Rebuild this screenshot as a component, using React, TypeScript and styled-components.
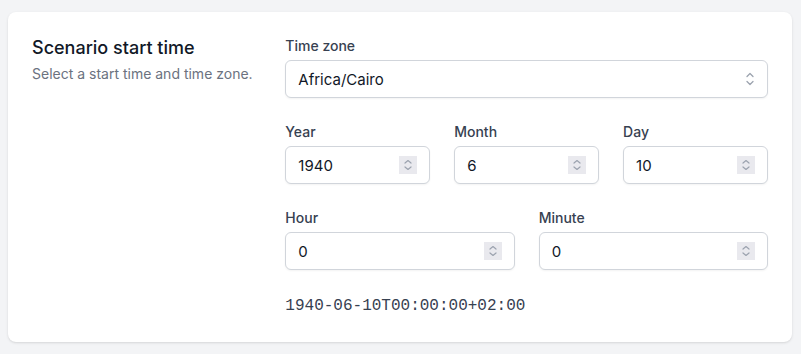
import React from 'react';
import styled, { createGlobalStyle } from 'styled-components';

const GlobalStyle = createGlobalStyle`
  body {
    margin: 0;
    padding: 12px 9px 12px 8px;
    background: #f3f4f6;
    font-family: Inter, 'Noto Sans', sans-serif;
    color: #111827;
  }
`;

const Card = styled.section`
  display: grid;
  grid-template-columns: repeat(3, 1fr);
  column-gap: 24px;
  padding: 24px;
  background: #fff;
  border-radius: 8px;
  box-shadow: 0 1px 3px rgba(0, 0, 0, 0.1), 0 1px 2px -1px rgba(0, 0, 0, 0.1);
`;

const Intro = styled.div``;

const Title = styled.h2`
  margin: 0;
  font-size: 18px;
  line-height: 24px;
  font-weight: 500;
  color: #111827;
`;

const Description = styled.p`
  margin: 4px 0 0;
  font-size: 14px;
  line-height: 20px;
  color: #6b7280;
`;

const Fields = styled.div`
  grid-column: span 2;
  display: flex;
  flex-direction: column;
  gap: 24px;
`;

const Row = styled.div<{ $cols: number }>`
  display: grid;
  grid-template-columns: repeat(${p => p.$cols}, 1fr);
  gap: 24px;
`;

const Field = styled.label`
  display: flex;
  flex-direction: column;
  gap: 4px;
`;

const Label = styled.span`
  font-size: 14px;
  line-height: 20px;
  font-weight: 500;
  color: #374151;
`;

const inputBase = `
  box-sizing: border-box;
  width: 100%;
  height: 38px;
  padding: 0 12px;
  border: 1px solid #d1d5db;
  border-radius: 6px;
  background: #fff;
  font-family: Inter, 'Noto Sans', sans-serif;
  font-size: 15px;
  color: #111827;
  box-shadow: 0 1px 2px rgba(0, 0, 0, 0.05);
  outline: none;
`;

const ControlWrap = styled.div`
  position: relative;
`;

const Select = styled.select`
  ${inputBase}
  appearance: none;
  padding-right: 40px;
`;

const SelectIcon = styled.svg`
  position: absolute;
  right: 12px;
  top: 50%;
  width: 12px;
  height: 16px;
  transform: translateY(-50%);
  pointer-events: none;
  color: #9ca3af;
`;

const NumberInput = styled.input`
  ${inputBase}
  padding-right: 40px;
  -moz-appearance: textfield;

  &::-webkit-inner-spin-button,
  &::-webkit-outer-spin-button {
    -webkit-appearance: none;
    margin: 0;
  }
`;

const Spinner = styled.svg`
  position: absolute;
  right: 13px;
  top: 50%;
  width: 18px;
  height: 18px;
  transform: translateY(-50%);
  pointer-events: none;
  background: #e9e9ee;
  color: #9ca3af;
`;

const Output = styled.code`
  display: block;
  font-family: 'Liberation Mono', monospace;
  font-size: 16px;
  line-height: 24px;
  color: #374151;
`;

const UpDown = () => (
  <>
    <path d="M6 7 9 4.5 12 7" />
    <path d="M6 11 9 13.5 12 11" />
  </>
);

const NumberField = ({ label, value }: { label: string; value: number }) => (
  <Field>
    <Label>{label}</Label>
    <ControlWrap>
      <NumberInput type="number" defaultValue={value} />
      <Spinner viewBox="0 0 18 18" fill="none" stroke="currentColor" strokeWidth="1.2" strokeLinecap="round" strokeLinejoin="round">
        <UpDown />
      </Spinner>
    </ControlWrap>
  </Field>
);

export default function App() {
  return (
    <>
      <GlobalStyle />
      <Card>
        <Intro>
          <Title>Scenario start time</Title>
          <Description>Select a start time and time zone.</Description>
        </Intro>
        <Fields>
          <Field>
            <Label>Time zone</Label>
            <ControlWrap>
              <Select defaultValue="Africa/Cairo">
                <option>Africa/Cairo</option>
                <option>Europe/London</option>
                <option>UTC</option>
              </Select>
              <SelectIcon viewBox="0 0 12 16" fill="none" stroke="currentColor" strokeWidth="1.3" strokeLinecap="round" strokeLinejoin="round">
                <path d="M3 5.5 6 2.5 9 5.5" />
                <path d="M3 10.5 6 13.5 9 10.5" />
              </SelectIcon>
            </ControlWrap>
          </Field>
          <Row $cols={3}>
            <NumberField label="Year" value={1940} />
            <NumberField label="Month" value={6} />
            <NumberField label="Day" value={10} />
          </Row>
          <Row $cols={2}>
            <NumberField label="Hour" value={0} />
            <NumberField label="Minute" value={0} />
          </Row>
          <Output>1940-06-10T00:00:00+02:00</Output>
        </Fields>
      </Card>
    </>
  );
}
